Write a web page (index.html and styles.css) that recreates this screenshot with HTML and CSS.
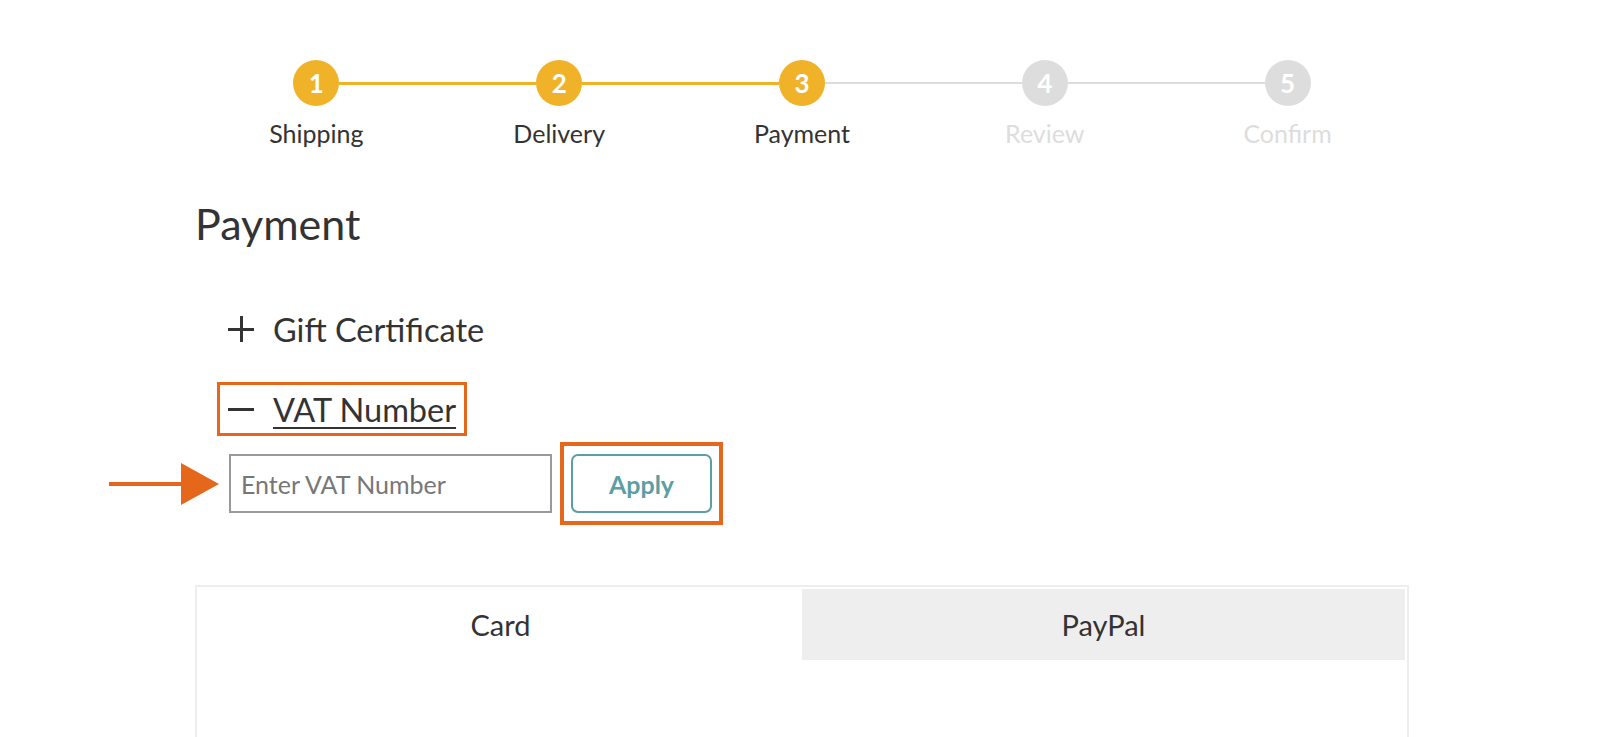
FILE: index.html
```html
<!DOCTYPE html>
<html lang="en">
<head>
  <meta charset="UTF-8"/>
  <meta name="viewport" content="width=device-width, initial-scale=1"/>
  <title>Checkout – Payment</title>
  <link rel="stylesheet" href="styles.css">
</head>
<body>
  <div class="checkout">
    <ol class="steps">
      <li class="step done"><span class="dot">1</span><span class="label">Shipping</span></li>
      <li class="step done"><span class="dot">2</span><span class="label">Delivery</span></li>
      <li class="step current"><span class="dot">3</span><span class="label">Payment</span></li>
      <li class="step"><span class="dot">4</span><span class="label">Review</span></li>
      <li class="step"><span class="dot">5</span><span class="label">Confirm</span></li>
    </ol>

    <h1 class="title">Payment</h1>

    <div class="extras">
      <div class="toggle">
        <span class="sign plus"></span>
        <span class="toggle-text">Gift Certificate</span>
      </div>

      <div class="toggle open marked">
        <span class="sign"></span>
        <span class="toggle-text">VAT Number</span>
      </div>

      <div class="vat-row">
        <svg class="pointer" width="110" height="42" viewBox="0 0 110 42">
          <rect x="0" y="19" width="76" height="4" fill="#e5671b"/>
          <polygon points="72,0 110,21 72,42" fill="#e5671b"/>
        </svg>
        <input type="text" class="vat-input" placeholder="Enter VAT Number">
        <div class="marked-box">
          <button class="apply">Apply</button>
        </div>
      </div>
    </div>

    <div class="methods">
      <div class="tabs">
        <div class="tab active">Card</div>
        <div class="tab">PayPal</div>
      </div>
      <div class="method-body"></div>
    </div>
  </div>
</body>
</html>
```

FILE: styles.css
```css
* { box-sizing:border-box; margin:0; padding:0 }
html, body {
  background:#fff; color:#333;
  font-family:'Lato', 'Open Sans', sans-serif;
}
.checkout { width:1214px; margin:0 auto; }

/* progress */
.steps {
  list-style:none; display:grid; grid-template-columns:repeat(5, 1fr);
  padding-top:60px;
}
.step { position:relative; display:flex; flex-direction:column; align-items:center; }
.step .dot {
  width:46px; height:46px; border-radius:50%;
  background:#ddd; color:#fff;
  display:flex; align-items:center; justify-content:center;
  font-size:26px; font-weight:700;
}
.step .label { margin-top:14px; font-size:25px; line-height:26px; color:#ddd; }
.step.done .dot, .step.current .dot { background:#efb229 }
.step.done .label, .step.current .label { color:#333 }
.step:not(:last-child)::after {
  content:''; position:absolute; top:22px;
  left:calc(50% + 23px); width:calc(100% - 46px); height:2px;
  background:#ddd;
}
.step.done::after { background:#efb229; height:3px; top:21.5px }

.title { font-size:43px; font-weight:400; line-height:52px; margin-top:52px; }

/* gift / vat */
.extras { padding:52px 0 0 22px; }
.toggle {
  display:flex; width:max-content; align-items:center; gap:19px;
  border:3px solid transparent; padding:0 8px; height:54px;
  font-size:32.5px; cursor:pointer;
}
.toggle + .toggle { margin-top:26px }
.toggle .sign { position:relative; width:26px; height:26px; }
.toggle .sign::before, .plus::after {
  content:''; position:absolute; left:0; top:11.5px; width:26px; height:3px; background:#333;
}
.plus::after { left:11.5px; top:0; width:3px; height:26px }
.toggle.open .toggle-text { text-decoration:underline; text-underline-offset:5px; text-decoration-thickness:2px }
.marked { border-color:#e5671b }

.vat-row { position:relative; display:flex; align-items:center; gap:8px; margin:6px 0 0 12px; }
.pointer { position:absolute; left:-120px; top:50%; transform:translateY(-50%) }
.vat-input {
  width:323px; height:59px; padding:0 10px;
  border:2px solid #999; font:25px 'Lato', sans-serif; color:#333;
}
.vat-input::placeholder { color:#777 }
.marked-box { border:4px solid #e5671b; padding:8px 7px; }
.apply {
  display:block; width:141px; height:59px; background:#fff;
  border:2px solid #5b9ea4; border-radius:7px;
  color:#5b9ea4; font:700 25px 'Lato', sans-serif; cursor:pointer;
}

/* payment methods */
.methods { margin-top:60px; border:2px solid #eee; padding:2px; min-height:300px; }
.tabs { display:grid; grid-template-columns:1fr 1fr; }
.tab { height:71px; display:flex; align-items:center; justify-content:center; font-size:29px; color:#333; background:#eee }
.tab.active { background:#fff }
.method-body { height:200px }
```
